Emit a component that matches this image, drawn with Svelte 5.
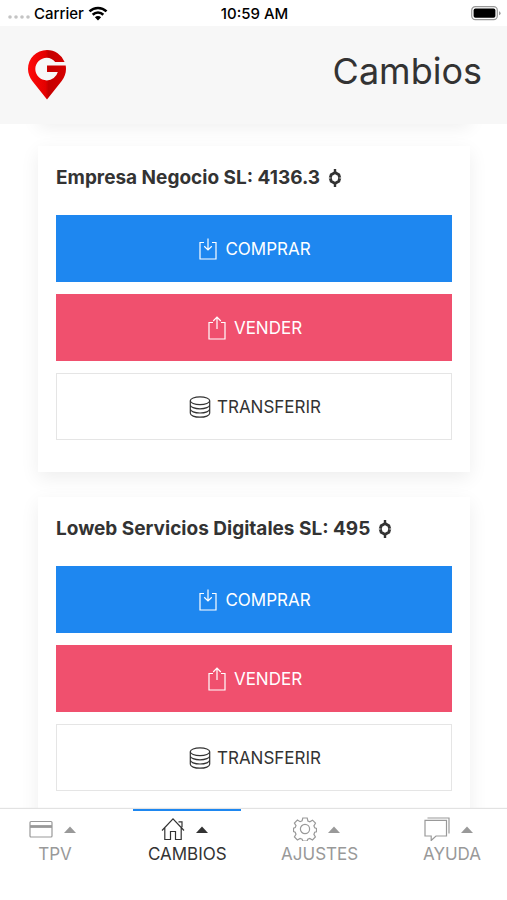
<script>
  const accounts = [
    { name: 'Empresa Negocio SL', balance: '4136.3' },
    { name: 'Loweb Servicios Digitales SL', balance: '495' }
  ];

  const tabs = [
    { id: 'tpv', label: 'TPV' },
    { id: 'cambios', label: 'CAMBIOS' },
    { id: 'ajustes', label: 'AJUSTES' },
    { id: 'ayuda', label: 'AYUDA' }
  ];

  let active = $state('cambios');
</script>

<div class="app">
  <div class="status">
    <div class="carrier">
      <svg width="22" height="6" viewBox="0 0 22 6" fill="#c4c4c4" aria-hidden="true">
        <circle cx="2" cy="3" r="1.8" /><circle cx="8" cy="3" r="1.8" /><circle cx="14" cy="3" r="1.8" /><circle cx="20" cy="3" r="1.8" />
      </svg>
      <span>Carrier</span>
      <svg class="wifi" width="20" height="15" viewBox="0 0 20 15" aria-hidden="true">
        <path d="M1.5 5.4a12.2 12.2 0 0 1 17 0M4.7 8.7a7.6 7.6 0 0 1 10.6 0" fill="none" stroke="#000" stroke-width="2.6" />
        <path d="M10 14.4 6.9 11.3a4.4 4.4 0 0 1 6.2 0z" />
      </svg>
    </div>
    <span>10:59 AM</span>
    <svg class="battery" width="30" height="15" viewBox="0 0 30 15" aria-hidden="true">
      <rect x=".7" y=".7" width="25.6" height="13" rx="3.6" fill="none" stroke="#999" stroke-width="1.2" />
      <rect x="2.6" y="2.6" width="21.8" height="9.2" rx="1.8" />
      <path d="M28 5.2q1.6.6 1.6 2t-1.6 2z" fill="#999" />
    </svg>
  </div>

  <header>
    <svg width="38" height="50" viewBox="0 0 38 50" role="img" aria-label="Logo">
      <defs>
        <linearGradient id="pin" x1="0" x2="1">
          <stop offset="0" stop-color="#ff0a0a" />
          <stop offset=".46" stop-color="#e40000" />
          <stop offset=".54" stop-color="#c40000" />
          <stop offset="1" stop-color="#d60000" />
        </linearGradient>
      </defs>
      <path
        fill="url(#pin)"
        d="M36.600 12A19 19 0 0 0 19 0C8.400 0 0 8.500 0 19c0 4.600 1.700 8.400 4.300 12L19 49.500 33.700 31C36.400 27.300 38 23.400 38 19c0-1.200-.1-2.400-.3-3.500H19V22h10.800a11.300 11.300 0 0 1-11 8.400A11.400 11.400 0 0 1 7.300 19C7.300 12.700 12.500 7.700 18.800 7.700c3.500 0 6.300 1.600 8.400 4.300z"
      />
    </svg>
    <h1>Cambios</h1>
  </header>

  <main>
    <div class="card passed"></div>
    {#each accounts as account}
      <section class="card">
        <h2>
          {account.name}: {account.balance}
          <svg width="14" height="18" viewBox="0 0 14 18" aria-hidden="true">
            <path d="M7 3.600 10.800 5.800 11.800 8.900 10.800 12.200 7 14.400 3.200 12.200 2.200 8.900 3.200 5.800z" fill="none" stroke="#333" stroke-width="2.900" />
            <path d="M5.800 0h2.400v4H5.800zM5.800 14h2.400v4H5.800z" fill="#333" />
            <path d="M0 9h2.500M11.500 9h2.500" stroke="#fff" stroke-width="1" />
          </svg>
        </h2>
        <button class="buy">
          <svg width="18" height="22" viewBox="0 0 18 22" aria-hidden="true">
            <path d="M5 4.500H1v16.500h16V4.500h-4M9 .5v11.500M5.200 8.300 9 12l3.800-3.700" />
          </svg>
          COMPRAR
        </button>
        <button class="sell">
          <svg width="18" height="24" viewBox="0 0 18 24" aria-hidden="true">
            <path d="M5 6.500H1v16.500h16V6.500h-4M9 13V1.200M5.200 5 9 1.200 12.800 5" />
          </svg>
          VENDER
        </button>
        <button class="transfer">
          <svg width="22" height="22" viewBox="0 0 22 22" aria-hidden="true">
            <ellipse cx="11" cy="4.700" rx="9.700" ry="3.900" />
            <path d="M1.300 4.700v12.600c0 2.200 4.300 3.900 9.700 3.900s9.700-1.700 9.700-3.900V4.700M1.300 8.900c0 2.200 4.300 3.900 9.700 3.900s9.700-1.700 9.700-3.900M1.300 13.100c0 2.200 4.300 3.900 9.700 3.900s9.700-1.700 9.700-3.900" />
          </svg>
          TRANSFERIR
        </button>
      </section>
    {/each}
  </main>

  <nav>
    {#each tabs as tab}
      <button class="tab" class:active={active === tab.id} onclick={() => (active = tab.id)}>
        <span class="glyphs">
          {#if tab.id === 'tpv'}
            <svg width="24" height="24" viewBox="0 0 24 24" aria-hidden="true">
              <rect x="1" y="4.500" width="22" height="15.500" rx="1" />
              <path d="M1 9.500h22" stroke-width="2.800" />
            </svg>
          {:else if tab.id === 'cambios'}
            <svg width="24" height="24" viewBox="0 0 24 24" aria-hidden="true">
              <path d="M1 13.500 12 1.800 23 13.500M3.800 11v11.500h5.700V14.500h5v8h5.700V11M17.500 4.800h3.500v5.500" />
            </svg>
          {:else if tab.id === 'ajustes'}
            <svg width="24" height="24" viewBox="0 0 24 24" aria-hidden="true">
              <circle cx="12" cy="12" r="4.600" />
              <path d="M9.800 1h4.400l.7 3 1.900.8 2.700-1.600 3 3-1.600 2.700.8 1.900 1.800.6v3.300l-1.800.6-.8 2.100 1.500 2.600-2.900 3-2.800-1.600-1.900.8-.7 1.800H9.800l-.7-1.800-2-.8-2.700 1.600-3-3L3 17.200l-.8-2-1.700-.6v-3.400l1.700-.6.8-2L1.400 6l3-3 2.700 1.700 2-.8z" />
            </svg>
          {:else}
            <svg width="26" height="24" viewBox="0 0 26 24" aria-hidden="true">
              <path d="M1 3.300h21.500v15.700H12l-4.800 4.500V19H1zM3.500 1H25v15.500" />
            </svg>
          {/if}
          <svg class="caret" width="12" height="7" viewBox="0 0 12 7" aria-hidden="true">
            <path d="M0 7 6 .5 12 7z" />
          </svg>
        </span>
        {tab.label}
      </button>
    {/each}
  </nav>
</div>

<style>
  :global(body) {
    margin: 0;
    background: #fff;
  }
  .app {
    display: flex;
    flex-direction: column;
    height: 100vh;
    overflow: hidden;
    font-family: Inter, 'Liberation Sans', sans-serif;
    color: #333;
  }
  .status {
    display: grid;
    grid-template-columns: 1fr auto 1fr;
    align-items: center;
    height: 26px;
    padding: 0 6px 0 8px;
    color: #000;
    font-size: 15px;
    font-weight: 500;
  }
  .carrier {
    display: flex;
    align-items: center;
    gap: 4px;
  }
  .carrier svg:first-child {
    margin-top: 8px;
  }
  .battery {
    justify-self: end;
  }
  header {
    display: flex;
    flex: none;
    align-items: center;
    justify-content: space-between;
    box-sizing: border-box;
    height: 98px;
    padding: 0 25px 0 28px;
    background: #f7f7f7;
  }
  h1 {
    margin: 0;
    font-size: 36px;
    font-weight: 400;
    line-height: 48px;
    padding-bottom: 8px;
  }
  main {
    display: flex;
    flex: 1;
    flex-direction: column;
    gap: 25px;
    min-height: 0;
    padding: 0 37px 0 38px;
    overflow: hidden;
  }
  .card {
    display: flex;
    flex: none;
    flex-direction: column;
    gap: 12px;
    padding: 16px 18px 32px;
    background: #fff;
    box-shadow: 0 6px 18px rgba(0, 0, 0, 0.07);
  }
  .passed {
    margin-top: -51px;
  }
  h2 {
    display: flex;
    align-items: center;
    gap: 8px;
    margin: 0 0 9px;
    font-size: 19px;
    font-weight: 700;
    line-height: 32px;
  }
  .card button {
    display: flex;
    align-items: center;
    justify-content: center;
    gap: 8px;
    box-sizing: border-box;
    height: 67px;
    padding: 0 0 0 2px;
    border: 0;
    color: #fff;
    font: 400 17px Inter, 'Liberation Sans', sans-serif;
  }
  .card button svg {
    fill: none;
    stroke: currentColor;
    stroke-width: 1.2;
  }
  .card .buy {
    background: #1e87f0;
  }
  .card .sell {
    background: #f0506e;
  }
  .card .transfer {
    gap: 6px;
    border: 1px solid #e5e5e5;
    background: #fff;
    color: #333;
  }
  nav {
    display: flex;
    flex: none;
    justify-content: space-between;
    height: 91px;
    padding: 0 1px;
    background: #fff;
    box-shadow: 0 -1px 1px #e2e2e2;
  }
  .tab {
    display: flex;
    flex-direction: column;
    align-items: center;
    gap: 1px;
    width: 108px;
    padding: 6px 0 0;
    border: 0;
    border-top: 2px solid transparent;
    background: none;
    color: #999;
    font: 400 17px/24px Inter, 'Liberation Sans', sans-serif;
  }
  .tab.active {
    border-top-color: #1e87f0;
    color: #333;
  }
  .glyphs {
    display: flex;
    align-items: center;
    gap: 11px;
    padding-right: 6px;
  }
  .glyphs svg {
    fill: none;
    stroke: currentColor;
    stroke-width: 1.2;
  }
  .glyphs .caret {
    fill: currentColor;
    stroke: none;
  }
</style>
